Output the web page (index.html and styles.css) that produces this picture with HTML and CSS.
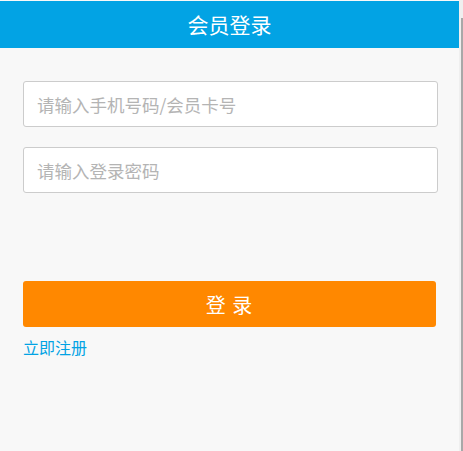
FILE: index.html
```html
<!DOCTYPE html>
<html lang="zh-CN">
<head>
<meta charset="utf-8">
<title>会员登录</title>
<link rel="stylesheet" href="styles.css">
</head>
<body>
<div class="page">
  <main class="main">
    <header class="header">会员登录</header>
    <form class="form">
      <input class="field" type="text" placeholder="请输入手机号码/会员卡号">
      <input class="field field-second" type="password" placeholder="请输入登录密码">
      <button class="submit" type="button">登 录</button>
      <a class="register" href="#">立即注册</a>
    </form>
  </main>
  <div class="edge"><div class="thumb"></div></div>
</div>
</body>
</html>
```
FILE: styles.css
```css
html, body {
  margin: 0;
  padding: 0;
  height: 100%;
}
body {
  background: #f8f8f8;
  font-family: "Noto Sans CJK SC", "Liberation Sans", sans-serif;
  overflow: hidden;
}
.page {
  display: flex;
  height: 451px;
}
.main {
  width: 459px;
  flex: none;
}
.header {
  margin-top: 1px;
  height: 47px;
  line-height: 46px;
  background: #02a3e4;
  color: #fff;
  text-align: center;
  font-size: 21px;
}
.form {
  display: flex;
  flex-direction: column;
  padding: 33px 21px 0 23px;
}
.field {
  box-sizing: border-box;
  height: 46px;
  width: 415px;
  margin: 0;
  border: 1px solid #cccccc;
  border-radius: 3px;
  background: #fff;
  padding: 0 13px;
  font-family: inherit;
  font-size: 17.5px;
  color: #333;
  outline: none;
}
.field::placeholder {
  color: #b4b4b4;
}
.field-second {
  margin-top: 20px;
}
.submit {
  margin-top: 88px;
  box-sizing: border-box;
  width: 413px;
  height: 46px;
  border: none;
  border-radius: 3px;
  background: #ff8800;
  color: #fff;
  font-family: inherit;
  font-size: 20px;
  padding: 0;
  letter-spacing: 1px;
}
.register {
  align-self: flex-start;
  margin-top: 8px;
  font-size: 16px;
  line-height: 24px;
  color: #02a3e4;
  text-decoration: none;
}
.edge {
  width: 4px;
  flex: none;
  background: #efefef;
  display: flex;
  justify-content: flex-end;
}
.thumb {
  width: 2px;
  margin-top: 18px;
  background: #a8a8a8;
}
```
